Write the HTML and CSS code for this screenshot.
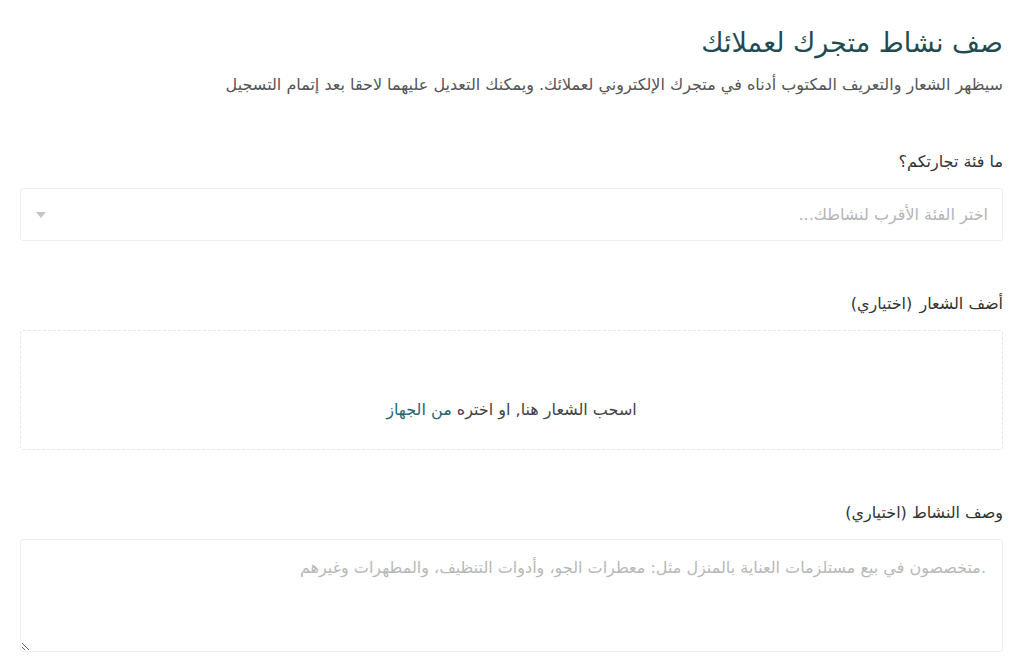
FILE: index.html
```html
<!DOCTYPE html>
<html lang="ar" dir="rtl">
<head>
    <meta charset="UTF-8">
    <meta name="viewport" content="width=device-width, initial-scale=1.0">
    <title>وصف النشاط</title>
    <link rel="stylesheet" href="styles.css">
</head>
<body>
    <main class="store-form">
        <h1 class="form-title">صف نشاط متجرك لعملائك</h1>
        <p class="form-intro">سيظهر الشعار والتعريف المكتوب أدناه في متجرك الإلكتروني لعملائك. ويمكنك التعديل عليهما لاحقا بعد إتمام التسجيل</p>

        <div class="field">
            <label class="field-label" for="category">ما فئة تجارتكم؟</label>
            <div class="select-box" id="category">
                <span class="placeholder">اختر الفئة الأقرب لنشاطك...</span>
                <span class="select-arrow"></span>
            </div>
        </div>

        <div class="field">
            <label class="field-label">أضف الشعار <span class="optional">(اختياري)</span></label>
            <div class="drop-zone">
                <span>اسحب الشعار هنا, او اختره <a href="#" class="pick-link">من الجهاز</a></span>
            </div>
        </div>

        <div class="field">
            <label class="field-label" for="about">وصف النشاط (اختياري)</label>
            <textarea class="about-input" id="about" placeholder=".متخصصون في بيع مستلزمات العناية بالمنزل مثل: معطرات الجو، وأدوات التنظيف، والمطهرات وغيرهم"></textarea>
        </div>
    </main>
</body>
</html>
```

FILE: styles.css
```css
body {
    margin: 0;
    padding: 0;
    background-color: #fff;
    font-family: "DejaVu Sans", "Noto Sans", sans-serif;
    color: #333;
}

.store-form {
    padding: 24px 21px 0 20px;
}

.form-title {
    margin: 0;
    font-size: 27px;
    font-weight: 500;
    color: #1f4c52;
    line-height: 38px;
}

.form-intro {
    margin: 12px 0 0;
    font-size: 16px;
    color: #555;
    line-height: 22px;
}

.field {
    margin-top: 52px;
}

.form-intro + .field {
    margin-top: 55px;
}

.field-label {
    display: block;
    font-size: 16px;
    color: #333;
    line-height: 22px;
    margin-bottom: 15px;
}

.optional {
    margin-right: 2px;
}

.select-box {
    display: flex;
    align-items: center;
    justify-content: space-between;
    height: 53px;
    padding: 0 14px;
    border: 1px solid #eee;
    border-radius: 3px;
    box-sizing: border-box;
}

.placeholder {
    font-size: 16px;
    color: #b5b5b5;
}

.select-arrow {
    width: 0;
    height: 0;
    margin-left: 1px;
    border-left: 5px solid transparent;
    border-right: 5px solid transparent;
    border-top: 6px solid #c4c4c4;
}

.drop-zone {
    display: flex;
    justify-content: center;
    align-items: flex-end;
    height: 120px;
    border: 1px dashed #e6e6e6;
    border-radius: 3px;
    box-sizing: border-box;
    font-size: 16px;
    line-height: 22px;
    color: #444;
}

.drop-zone span {
    margin-bottom: 28px;
}

.pick-link {
    color: #2a6670;
    text-decoration: none;
}

.about-input {
    display: block;
    width: 100%;
    height: 113px;
    margin: 0;
    padding: 17px 16px;
    border: 1px solid #eee;
    border-radius: 3px;
    box-sizing: border-box;
    font-family: inherit;
    font-size: 16px;
    line-height: 22px;
    color: #333;
    resize: vertical;
    outline: none;
}

.about-input::placeholder {
    color: #b8b8b8;
}
```
